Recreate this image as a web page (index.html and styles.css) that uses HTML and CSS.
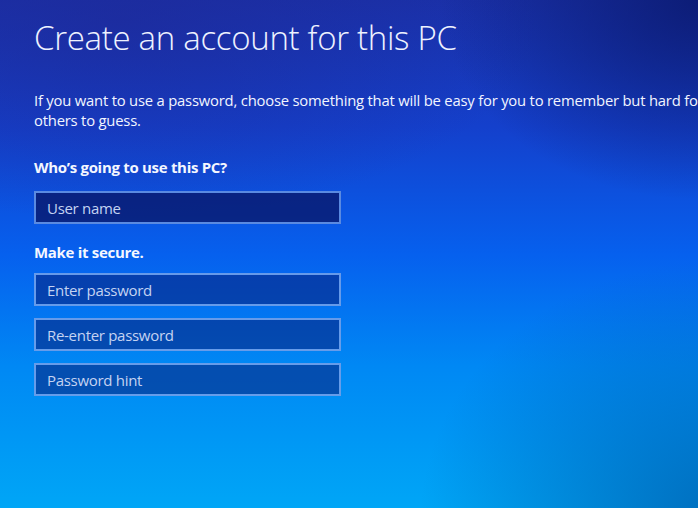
FILE: index.html
```html
<!DOCTYPE html>
<html lang="en">
<head>
<meta charset="utf-8">
<title>Create an account for this PC</title>
<link rel="stylesheet" href="styles.css">
</head>
<body>
<main class="screen">
  <h1 class="title">Create an account for this PC</h1>
  <p class="intro">If you want to use a password, choose something that will be easy for you to remember but hard for<br>others to guess.</p>
  <h2 class="label">Who’s going to use this PC?</h2>
  <div class="field field-focus">User name</div>
  <h2 class="label label-secure">Make it secure.</h2>
  <div class="fields">
    <div class="field">Enter password</div>
    <div class="field">Re-enter password</div>
    <div class="field">Password hint</div>
  </div>
</main>
</body>
</html>
```
FILE: styles.css
```css
html, body {
  margin: 0;
  padding: 0;
  width: 698px;
  height: 508px;
  overflow: hidden;
}

body {
  font-family: "Open Sans", "Noto Sans", sans-serif;
  color: #ffffff;
  background-color: #0a5ae8;
  background-image:
    radial-gradient(ellipse 260px 200px at 700px 0px, rgba(10, 25, 110, 0.85), rgba(10, 25, 110, 0) 100%),
    radial-gradient(ellipse 300px 260px at 720px 520px, rgba(0, 90, 170, 0.75), rgba(0, 90, 170, 0) 100%),
    radial-gradient(ellipse 420px 200px at 120px 20px, rgba(30, 40, 150, 0.6), rgba(30, 40, 150, 0) 100%),
    linear-gradient(180deg, #1a31aa 0%, #1440cc 25%, #0660ee 50%, #0088f4 72%, #00a6f6 100%);
}

.screen {
  padding: 15px 0 0 34px;
  display: flex;
  flex-direction: column;
  align-items: flex-start;
}

.title {
  margin: 0;
  font-weight: 300;
  font-size: 33px;
  line-height: 46px;
  letter-spacing: -0.3px;
  color: #eef2ff;
  white-space: nowrap;
}

.intro {
  margin: 29px 0 0 0;
  font-size: 14.8px;
  line-height: 20px;
  white-space: nowrap;
  letter-spacing: -0.2px;
  color: #f2f5ff;
}

.label {
  margin: 27px 0 0 0;
  font-size: 15px;
  font-weight: 700;
  line-height: 20px;
  letter-spacing: -0.3px;
  color: #f4f7ff;
}

.label-secure {
  margin-top: 18px;
}

.field {
  box-sizing: border-box;
  width: 307px;
  height: 33px;
  padding: 0 0 0 11px;
  display: flex;
  align-items: center;
  font-size: 15px;
  letter-spacing: -0.3px;
  color: #c4d3f2;
  background: rgba(8, 30, 120, 0.55);
  border: 2px solid rgba(120, 170, 245, 0.85);
}

.field-focus {
  margin-top: 14px;
  background: rgba(8, 20, 100, 0.75);
  border-color: rgba(100, 150, 235, 0.9);
}

.fields {
  margin-top: 11px;
  display: flex;
  flex-direction: column;
  gap: 12px;
}
```
